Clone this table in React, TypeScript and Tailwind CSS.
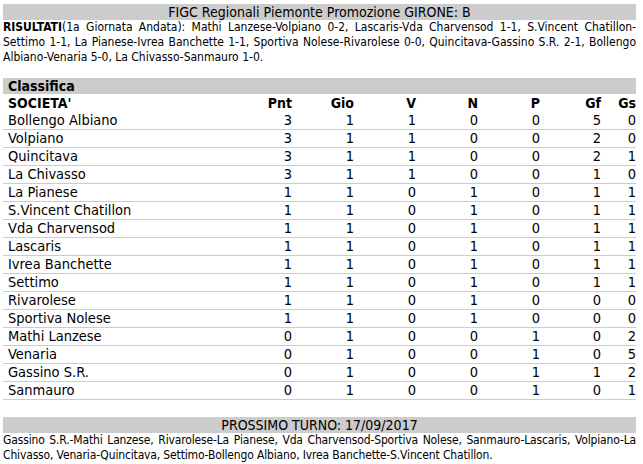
import React from "react";

const ROWS: [string, number, number, number, number, number, number, number][] = [
  ["Bollengo Albiano", 3, 1, 1, 0, 0, 5, 0],
  ["Volpiano", 3, 1, 1, 0, 0, 2, 0],
  ["Quincitava", 3, 1, 1, 0, 0, 2, 1],
  ["La Chivasso", 3, 1, 1, 0, 0, 1, 0],
  ["La Pianese", 1, 1, 0, 1, 0, 1, 1],
  ["S.Vincent Chatillon", 1, 1, 0, 1, 0, 1, 1],
  ["Vda Charvensod", 1, 1, 0, 1, 0, 1, 1],
  ["Lascaris", 1, 1, 0, 1, 0, 1, 1],
  ["Ivrea Banchette", 1, 1, 0, 1, 0, 1, 1],
  ["Settimo", 1, 1, 0, 1, 0, 1, 1],
  ["Rivarolese", 1, 1, 0, 1, 0, 0, 0],
  ["Sportiva Nolese", 1, 1, 0, 1, 0, 0, 0],
  ["Mathi Lanzese", 0, 1, 0, 0, 1, 0, 2],
  ["Venaria", 0, 1, 0, 0, 1, 0, 5],
  ["Gassino S.R.", 0, 1, 0, 0, 1, 1, 2],
  ["Sanmauro", 0, 1, 0, 0, 1, 0, 1],
];

const HEAD = ["Pnt", "Gio", "V", "N", "P", "Gf", "Gs"];
const GRID = "grid grid-cols-[227px_62px_62px_62px_62px_62px_61px_35px]";

export default function App() {
  return (
    <div
      className="w-[643px] h-[464px] bg-white text-black pt-[4px] pl-[3px] overflow-hidden"
      style={{ fontFamily: '"DejaVu Sans Condensed", "DejaVu Sans", sans-serif' }}
    >
      <div className="w-[633px]">
        <div className="bg-[#cccccc] h-[16px] leading-[16px] text-[14px] text-center">
          FIGC Regionali Piemonte Promozione GIRONE: B
        </div>
        <p className="text-[12px] leading-[15px] text-justify">
          <b>RISULTATI</b>(1a Giornata Andata): Mathi Lanzese-Volpiano 0-2, Lascaris-Vda Charvensod 1-1,
          S.Vincent Chatillon-Settimo 1-1, La Pianese-Ivrea Banchette 1-1, Sportiva Nolese-Rivarolese 0-0,
          Quincitava-Gassino S.R. 2-1, Bollengo Albiano-Venaria 5-0, La Chivasso-Sanmauro 1-0.
        </p>

        <div className="mt-[13px] bg-[#cccccc] h-[16px] leading-[16px] text-[14px] font-bold pl-[5px]">
          Classifica
        </div>
        <div className={`${GRID} h-[18px] leading-[16px] pt-[1px] text-[14px] font-bold`}>
          <div className="pl-[5px]">SOCIETA'</div>
          {HEAD.map((h) => (
            <div key={h} className="text-right">{h}</div>
          ))}
        </div>
        {ROWS.map((r) => (
          <div
            key={r[0]}
            className={`${GRID} h-[18px] leading-[17px] text-[14.5px] border-b border-[#cccccc]`}
          >
            <div className="pl-[5px]">{r[0]}</div>
            {r.slice(1).map((v, i) => (
              <div key={i} className="text-right">{v}</div>
            ))}
          </div>
        ))}

        <div className="mt-[17px] bg-[#cccccc] h-[16px] leading-[16px] text-[14px] text-center">
          PROSSIMO TURNO: 17/09/2017
        </div>
        <p className="text-[12px] leading-[15px] text-justify tracking-[-0.15px]">
          Gassino S.R.-Mathi Lanzese, Rivarolese-La Pianese, Vda Charvensod-Sportiva Nolese, Sanmauro-Lascaris,
          Volpiano-La Chivasso, Venaria-Quincitava, Settimo-Bollengo Albiano, Ivrea Banchette-S.Vincent Chatillon.
        </p>
      </div>
    </div>
  );
}
